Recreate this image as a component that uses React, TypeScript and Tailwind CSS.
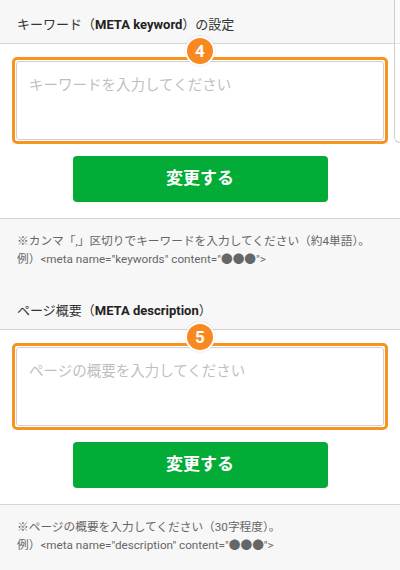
const FONT = "font-['Roboto','Noto_Sans_CJK_JP',sans-serif]";

type FieldProps = {
  title: string;
  tag: string;
  suffix?: string;
  num: number;
  placeholder: string;
  note: string;
  example: string;
};

function Field({ title, tag, suffix, num, placeholder, note, example }: FieldProps) {
  return (
    <div>
      {/* 見出し */}
      <div className="bg-[#f7f7f7] border-b border-[#d5d5d5] px-[17px] pt-[15px] pb-[8px] text-[13px] leading-[20px] text-[#333]">
        {title}（<span className="font-bold text-[#222]">{tag}</span>）{suffix}
      </div>

      {/* 入力欄 */}
      <div className="px-[12px] pt-[13px]">
        <div className="relative h-[87px] rounded-[5px] border-[3px] border-[#f7941d] p-[1px]">
          <div className="absolute left-1/2 top-[-24px] flex h-[30px] w-[30px] -translate-x-1/2 items-center justify-center rounded-full border-2 border-white bg-[#f7891e] text-[17px] font-bold leading-none text-white shadow-[0_0_2px_rgba(0,0,0,0.15)]">
            {num}
          </div>
          <div className="h-full rounded-[3px] border border-[#cfcfcf] bg-white px-[12px] pt-[14px] text-[14.5px] leading-[20px] text-[#bfbfbf]">
            {placeholder}
          </div>
        </div>
      </div>

      {/* ボタン */}
      <div className="flex justify-center pt-[12px] pb-[16px]">
        <button
          type="button"
          className="flex h-[46px] w-[255px] items-center justify-center rounded-[4px] bg-[#03ac37] text-[17px] font-bold text-white"
        >
          変更する
        </button>
      </div>

      {/* 注意書き */}
      <div className="border-t border-[#d5d5d5] bg-[#f7f7f7] px-[17px] pt-[13px] pb-[18px] text-[11.7px] leading-[18px] text-[#666]">
        <p>{note}</p>
        <p>{example}</p>
      </div>
    </div>
  );
}

export default function App() {
  return (
    <div className={`relative h-[570px] w-[400px] overflow-hidden bg-white ${FONT}`}>
      <Field
        title="キーワード"
        tag="META keyword"
        suffix="の設定"
        num={4}
        placeholder="キーワードを入力してください"
        note="※カンマ「,」区切りでキーワードを入力してください（約4単語）。"
        example={'例）<meta name="keywords" content="●●●">'}
      />
      <Field
        title="ページ概要"
        tag="META description"
        num={5}
        placeholder="ページの概要を入力してください"
        note="※ページの概要を入力してください（30字程度）。"
        example={'例）<meta name="description" content="●●●">'}
      />

      {/* 右端にはみ出している隣のパネル */}
      <div className="absolute right-0 top-0 h-[143px] w-[6px] rounded-bl-[6px] border-b border-l border-[#d0d0d0] bg-white/40" />
    </div>
  );
}
